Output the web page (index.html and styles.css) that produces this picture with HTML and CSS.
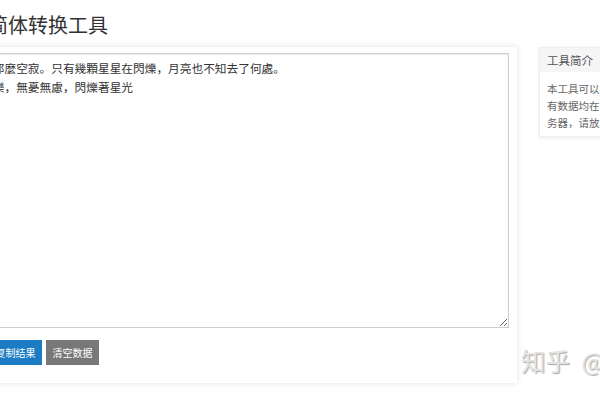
FILE: index.html
```html
<!DOCTYPE html>
<html lang="zh-CN">
<head>
<meta charset="utf-8">
<title>在线繁简体转换工具</title>
<link rel="stylesheet" href="styles.css">
</head>
<body>
<div class="page">
  <h1 class="title">在线繁简体转换工具</h1>
  <div class="layout">
    <div class="card">
      <textarea class="editor">夜空顯得那麼空寂。只有幾顆星星在閃爍，月亮也不知去了何處。
它們很快樂，無憂無慮，閃爍著星光</textarea>
      <div class="actions">
        <button class="btn btn-blue">转换简体</button>
        <button class="btn btn-blue">复制结果</button>
        <button class="btn btn-grey">清空数据</button>
      </div>
    </div>
    <aside class="panel">
      <div class="panel-head">工具简介</div>
      <div class="panel-body">本工具可以在线进行简繁体转换，所有数据均在本地浏览器处理，不经服务器，请放心使用。</div>
    </aside>
  </div>
</div>
<div class="watermark">知乎 @繁简转换</div>
</body>
</html>
```
FILE: styles.css
```css
html, body {
  margin: 0;
  padding: 0;
  background: #fff;
  overflow: hidden;
}
body {
  font-family: "Noto Sans CJK SC", "Noto Sans", "Liberation Sans", sans-serif;
  color: #333;
  width: 600px;
  height: 400px;
  position: relative;
}
.page {
  margin-left: -76px;
  width: 900px;
}
.title {
  margin: 11px 0 8px;
  padding-left: 4px;
  font-size: 20px;
  line-height: 28px;
  font-weight: normal;
  color: #333;
  white-space: nowrap;
}
.layout {
  display: flex;
  align-items: flex-start;
}
.card {
  width: 593px;
  box-sizing: border-box;
  padding: 6px 8px 18px;
  background: #fff;
  box-shadow: 0 0 6px rgba(0, 0, 0, 0.12);
}
.editor {
  display: block;
  width: 100%;
  height: 275px;
  box-sizing: border-box;
  margin: 0;
  padding: 4px 12px 4px 13px;
  border: 1px solid #cfcfcf;
  border-radius: 0;
  box-shadow: inset 0 1px 1px rgba(0, 0, 0, 0.08);
  font-family: "Noto Sans CJK SC", sans-serif;
  font-size: 11.7px;
  line-height: 19px;
  color: #333;
  resize: both;
  outline: none;
}
.actions {
  display: flex;
  gap: 4px;
  margin-top: 12px;
}
.btn {
  width: 53px;
  height: 25px;
  padding: 0;
  border: 0;
  border-radius: 0;
  font-family: "Noto Sans CJK SC", sans-serif;
  font-size: 10px;
  line-height: 25px;
  color: #fff;
  text-align: center;
}
.btn-blue { background: #1c7cc3; }
.btn-grey { background: #787878; }
.panel {
  margin-left: 22px;
  width: 184px;
  flex: none;
  background: #fff;
  border: 1px solid #eee;
  box-sizing: border-box;
  box-shadow: 0 1px 4px rgba(0, 0, 0, 0.08);
}
.panel-head {
  height: 24px;
  line-height: 24px;
  padding: 0 7px;
  background: #f5f5f5;
  font-size: 11.5px;
  color: #555;
}
.panel-body {
  padding: 8px 7px 5px;
  font-size: 10.5px;
  line-height: 17px;
  color: #666;
}
.watermark {
  position: absolute;
  left: 521px;
  top: 346px;
  font-family: "Noto Sans CJK SC", sans-serif;
  font-size: 24.5px;
  line-height: 30px;
  word-spacing: 6px;
  color: #e4e4e4;
  text-shadow: 1px 1px 1px rgba(0, 0, 0, 0.35);
  white-space: nowrap;
}
```
